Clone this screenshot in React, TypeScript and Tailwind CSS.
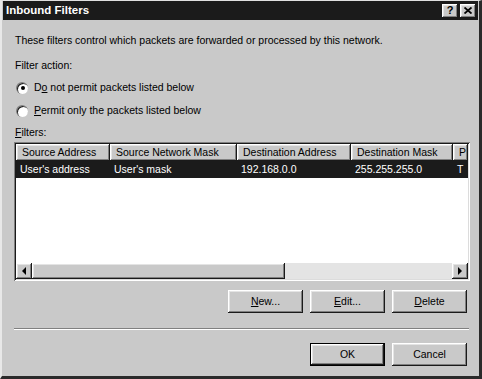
import React from "react";

const raised =
  "shadow-[inset_-1px_-1px_#1a1a1a,inset_1px_1px_#ffffff,inset_-2px_-2px_#808080,inset_2px_2px_#e4e4e4]";

function Btn({
  children,
  def,
  className = "",
}: {
  children: React.ReactNode;
  def?: boolean;
  className?: string;
}) {
  if (def) {
    return (
      <div className={`border border-black ${className}`}>
        <div className={`w-full h-full flex items-center justify-center bg-[#c9c9c9] ${raised}`}>{children}</div>
      </div>
    );
  }
  return (
    <div className={`flex items-center justify-center bg-[#c9c9c9] ${raised} ${className}`}>{children}</div>
  );
}

function Radio({ checked }: { checked?: boolean }) {
  return (
    <div className="w-[12px] h-[12px] rounded-full bg-[#808080] p-[1px] pr-0 pb-0 flex">
      <div className="w-[11px] h-[11px] rounded-full bg-white flex items-center justify-center shadow-[inset_1px_1px_#202020]">
        {checked && <div className="w-[4px] h-[4px] rounded-full bg-black" />}
      </div>
    </div>
  );
}

function Arrow({ dir }: { dir: "l" | "r" }) {
  return (
    <div className={`w-[16px] h-[16px] shrink-0 bg-[#c9c9c9] ${raised} flex items-center justify-center`}>
      <svg width="6" height="8" viewBox="0 0 6 8">
        {dir === "l" ? <polygon points="5,0 5,8 1,4" fill="#000" /> : <polygon points="1,0 1,8 5,4" fill="#000" />}
      </svg>
    </div>
  );
}

const cols = [
  { h: "Source Address", v: "User's address", w: 94 },
  { h: "Source Network Mask", v: "User's mask", w: 127 },
  { h: "Destination Address", v: "192.168.0.0", w: 114 },
  { h: "Destination Mask", v: "255.255.255.0", w: 102 },
  { h: "P", v: "T", w: 15 },
];

export default function App() {
  return (
    <div className="w-[482px] h-[379px] bg-[#c9c9c9] font-[Liberation_Sans,Arial,sans-serif] text-[10.5px] text-black leading-[13px] border-l-2 border-t border-l-[#e8e8e8] border-t-[#e0e0e0] border-r-[3px] border-b-[3px] border-r-[#2a2a2a] border-b-[#2a2a2a] flex flex-col overflow-hidden">
      {/* title bar */}
      <div className="mx-[1px] h-[19px] bg-[#1b1b1b] flex items-center pl-[3px] pr-[2px] shrink-0">
        <div className="text-white font-bold text-[11.5px] flex-1">Inbound Filters</div>
        <div className="flex gap-[2px]">
          <div className={`w-[16px] h-[14px] bg-[#c9c9c9] ${raised} flex items-center justify-center font-bold text-[11px] leading-none`}>?</div>
          <div className={`w-[16px] h-[14px] bg-[#c9c9c9] ${raised} flex items-center justify-center`}>
            <svg width="8" height="7" viewBox="0 0 8 7">
              <path d="M0.5 0.5 L7.5 6.5 M7.5 0.5 L0.5 6.5" stroke="#000" strokeWidth="1.8" />
            </svg>
          </div>
        </div>
      </div>

      <div className="pl-[12px] pr-[12px] flex flex-col">
        <div className="mt-[14px] pl-[1px]">These filters control which packets are forwarded or processed by this network.</div>
        <div className="mt-[12px] pl-[1px]">Filter action:</div>
        <div className="mt-[9px] flex items-center gap-[6px] pl-[2px]">
          <Radio checked />
          <span>
            D<u>o</u> not permit packets listed below
          </span>
        </div>
        <div className="mt-[10px] flex items-center gap-[6px] pl-[2px]">
          <Radio />
          <span>
            <u>P</u>ermit only the packets listed below
          </span>
        </div>
        <div className="mt-[9px] pl-[1px]">
          <u>F</u>ilters:
        </div>

        {/* list box */}
        <div className="mt-[3px] w-[456px] h-[139px] p-[2px] bg-white shadow-[inset_1px_1px_#808080,inset_-1px_-1px_#ffffff,inset_2px_2px_#1a1a1a,inset_-2px_-2px_#dcdcdc] flex flex-col">
          <div className="flex-1 overflow-hidden flex flex-col">
            <div className="flex h-[17px] shrink-0">
              {cols.map((c) => (
                <div
                  key={c.h}
                  style={{ width: c.w }}
                  className={`shrink-0 h-full bg-[#c9c9c9] ${raised} pl-[6px] flex items-center whitespace-nowrap overflow-hidden`}
                >
                  {c.h}
                </div>
              ))}
            </div>
            <div className="flex h-[17px] shrink-0 bg-[#1b1b1b] text-white">
              {cols.map((c) => (
                <div key={c.h} style={{ width: c.w }} className="shrink-0 h-full pl-[4px] flex items-center whitespace-nowrap overflow-hidden">
                  {c.v}
                </div>
              ))}
            </div>
            <div className="flex-1" />
          </div>
          <div className="h-[16px] flex shrink-0">
            <Arrow dir="l" />
            <div className={`w-[253px] h-full bg-[#c9c9c9] ${raised}`} />
            <div className="flex-1 h-full bg-[#e4e4e4]" />
            <Arrow dir="r" />
          </div>
        </div>

        <div className="mt-[9px] flex justify-end gap-[7px]">
          <Btn className="w-[75px] h-[23px]">
            <span>
              <u>N</u>ew...
            </span>
          </Btn>
          <Btn className="w-[75px] h-[23px]">
            <span>
              <u>E</u>dit...
            </span>
          </Btn>
          <Btn className="w-[75px] h-[23px]">
            <span>
              <u>D</u>elete
            </span>
          </Btn>
        </div>

        <div className="mt-[15px] h-[2px] w-[455px] border-t border-t-[#808080] border-b border-b-white" />

        <div className="mt-[13px] flex justify-end gap-[7px]">
          <Btn def className="w-[75px] h-[23px]">
            OK
          </Btn>
          <Btn className="w-[75px] h-[23px]">Cancel</Btn>
        </div>
      </div>
    </div>
  );
}
